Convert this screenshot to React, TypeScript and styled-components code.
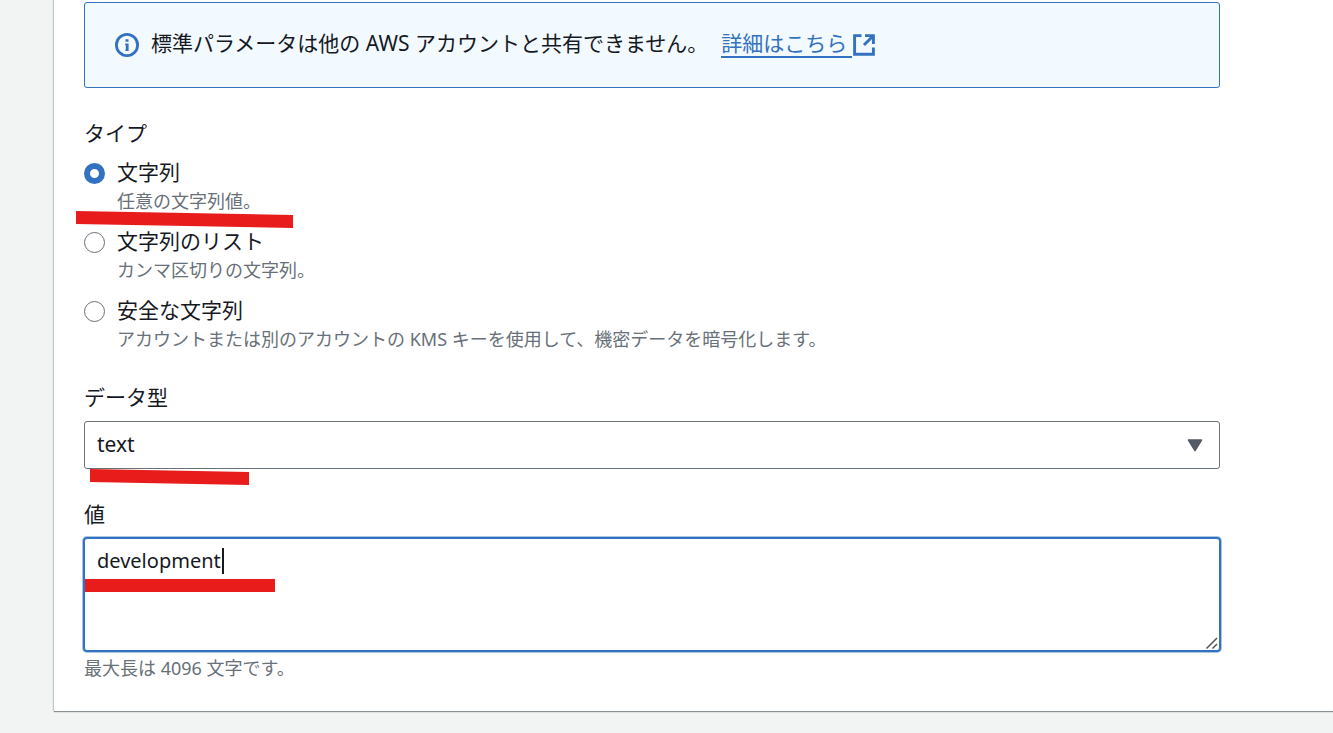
import React, { useState } from "react";
import styled, { createGlobalStyle } from "styled-components";

const blue = "#3272c0";
const ink = "#16191f";
const muted = "#687078";

const GlobalStyle = createGlobalStyle`
  *, *::before, *::after { box-sizing: border-box; }
  body {
    margin: 0;
    background: #f2f4f3;
    color: ${ink};
    font-family: "Noto Sans", "Noto Sans CJK JP", sans-serif;
    font-size: 21px;
    line-height: 26px;
  }
`;

const Page = styled.main`
  padding: 0 0 21px 54px;
  overflow: hidden;
`;

const Panel = styled.form`
  display: flex;
  flex-direction: column;
  gap: 32px;
  padding: 2px 113px 31px 30px;
  background: #fff;
  box-shadow: -1px 0 1px #c3c8c8, 0 1px 1px #80878b;
`;

const Alert = styled.div`
  display: flex;
  align-items: center;
  gap: 12px;
  height: 86px;
  padding: 0 30px;
  border: 1px solid ${blue};
  border-radius: 3px;
  background: #f2f9ff;
`;

const AlertText = styled.p`
  display: flex;
  gap: 13px;
  margin: 0;
  padding-bottom: 2px;
`;

const Link = styled.a`
  display: inline-flex;
  align-items: center;
  color: ${blue};
  text-decoration: none;

  svg { margin: 2px 0 0 1px; }
`;

const LinkText = styled.span`
  padding-right: 5px;
  border-bottom: 2px solid ${blue};
`;

const RadioGroup = styled.fieldset`
  display: flex;
  flex-direction: column;
  gap: 15px;
  min-width: 0;
  margin: 0;
  padding: 0 0 1px;
  border: 0;
`;

const Legend = styled.legend`
  padding: 0;
  margin-bottom: 13px;
`;

const Option = styled.label`
  position: relative;
  display: grid;
  grid-template-columns: 21px 1fr;
  column-gap: 12px;
  row-gap: 4px;
  align-items: center;
`;

const Radio = styled.input`
  appearance: none;
  width: 21px;
  height: 21px;
  margin: 2px 0 0;
  border: 1px solid ${muted};
  border-radius: 50%;
  background: #fff;

  &:checked { border: 6px solid ${blue}; }
`;

const Hint = styled.span`
  color: ${muted};
  font-size: 18px;
  line-height: 24px;
`;

const OptionHint = styled(Hint)`
  grid-column: 2;
`;

const Field = styled.div`
  display: flex;
  flex-direction: column;
  gap: 11px;
`;

const Control = styled.div`
  position: relative;
  display: flex;
`;

const Select = styled.select`
  appearance: none;
  width: 100%;
  height: 48px;
  padding: 0 12px 2px;
  border: 1px solid ${muted};
  border-radius: 3px;
  background: #fff;
  color: ${ink};
  font: inherit;
  outline: none;
`;

const Arrow = styled.svg`
  position: absolute;
  right: 17px;
  top: 18px;
  pointer-events: none;
`;

const TextArea = styled.textarea`
  width: 100%;
  height: 113px;
  padding: 9px 12px;
  border: 1px solid ${blue};
  border-radius: 3px;
  box-shadow: 0 0 0 1px ${blue}, 0 0 0 2px #a9c5e6;
  background: #fff;
  color: ${ink};
  font: inherit;
  font-size: 20px;
  outline: none;
  resize: vertical;

  &::-webkit-resizer { display: none; }
`;

const Grip = styled.svg`
  position: absolute;
  right: 2px;
  bottom: 2px;
  pointer-events: none;
`;

const Caret = styled.span`
  position: absolute;
  left: 138px;
  top: 10px;
  width: 2px;
  height: 26px;
  background: ${ink};
`;

const ValueField = styled(Field)`
  ${Hint} { margin-top: -6px; }
`;

const Marker = styled.svg<{ $left: number; $top: number }>`
  position: absolute;
  z-index: 1;
  left: ${(p) => p.$left}px;
  top: ${(p) => p.$top}px;
  fill: #e71c1b;
  pointer-events: none;
`;

const Underline = ({ left, top, width, drop }: { left: number; top: number; width: number; drop: number }) => (
  <Marker $left={left} $top={top} width={width} height={13 + drop} aria-hidden="true">
    <polygon points={`0,0 ${width},${drop} ${width},${13 + drop} 0,13`} />
  </Marker>
);

const InfoIcon = () => (
  <svg width="24" height="24" viewBox="0 0 24 24" fill="none" aria-hidden="true">
    <circle cx="12" cy="12" r="10.6" stroke={blue} strokeWidth="2.8" />
    <path d="M10.5 6.2h3v2.6h-3zM10.2 10.5h3.4V18h-3.2v-1.6h.4v-4.2h-.6z" fill={blue} />
  </svg>
);

const ExternalIcon = () => (
  <svg width="22" height="22" viewBox="0 0 22 22" fill="none" stroke={blue} strokeWidth="2.9" aria-hidden="true">
    <path d="M8.5 1.6H1.6V20.2H20.4V13.5M12 1.6H20.4V10M20 2L11 11" />
  </svg>
);

const options = [
  { id: "string", label: "文字列", hint: "任意の文字列値。" },
  { id: "list", label: "文字列のリスト", hint: "カンマ区切りの文字列。" },
  {
    id: "secure",
    label: "安全な文字列",
    hint: "アカウントまたは別のアカウントの KMS キーを使用して、機密データを暗号化します。",
  },
];

export default function App() {
  const [type, setType] = useState("string");
  const [value, setValue] = useState("development");

  return (
    <Page lang="ja">
      <GlobalStyle />
      <Panel>
        <Alert>
          <InfoIcon />
          <AlertText>
            標準パラメータは他の AWS アカウントと共有できません。
            <Link href="#details">
              <LinkText>詳細はこちら</LinkText>
              <ExternalIcon />
            </Link>
          </AlertText>
        </Alert>

        <RadioGroup>
          <Legend>タイプ</Legend>
          {options.map((o) => (
            <Option key={o.id}>
              <Radio type="radio" name="type" checked={type === o.id} onChange={() => setType(o.id)} />
              <span>{o.label}</span>
              <OptionHint>{o.hint}</OptionHint>
              {o.id === "string" && <Underline left={-8} top={52} width={217} drop={4} />}
            </Option>
          ))}
        </RadioGroup>

        <Field>
          <label htmlFor="data-type">データ型</label>
          <Control>
            <Select id="data-type">
              <option>text</option>
            </Select>
            <Arrow width="16" height="13" viewBox="0 0 16 13" aria-hidden="true">
              <path d="M1.5 1h13L8 11.5z" fill="#545b64" stroke="#545b64" strokeWidth="1.6" strokeLinejoin="round" />
            </Arrow>
            <Underline left={6} top={48} width={159} drop={3} />
          </Control>
        </Field>

        <ValueField>
          <label htmlFor="value">値</label>
          <Control>
            <TextArea
              id="value"
              spellCheck={false}
              value={value}
              onChange={(e) => setValue(e.target.value)}
            />
            <Grip width="12" height="12" viewBox="0 0 12 12" stroke="#555" strokeWidth="1.5" aria-hidden="true">
              <path d="M0.5 11.5L11 1M6.5 11.5L11 7" />
            </Grip>
            <Caret />
            <Underline left={1} top={41} width={190} drop={0} />
          </Control>
          <Hint>最大長は 4096 文字です。</Hint>
        </ValueField>
      </Panel>
    </Page>
  );
}
